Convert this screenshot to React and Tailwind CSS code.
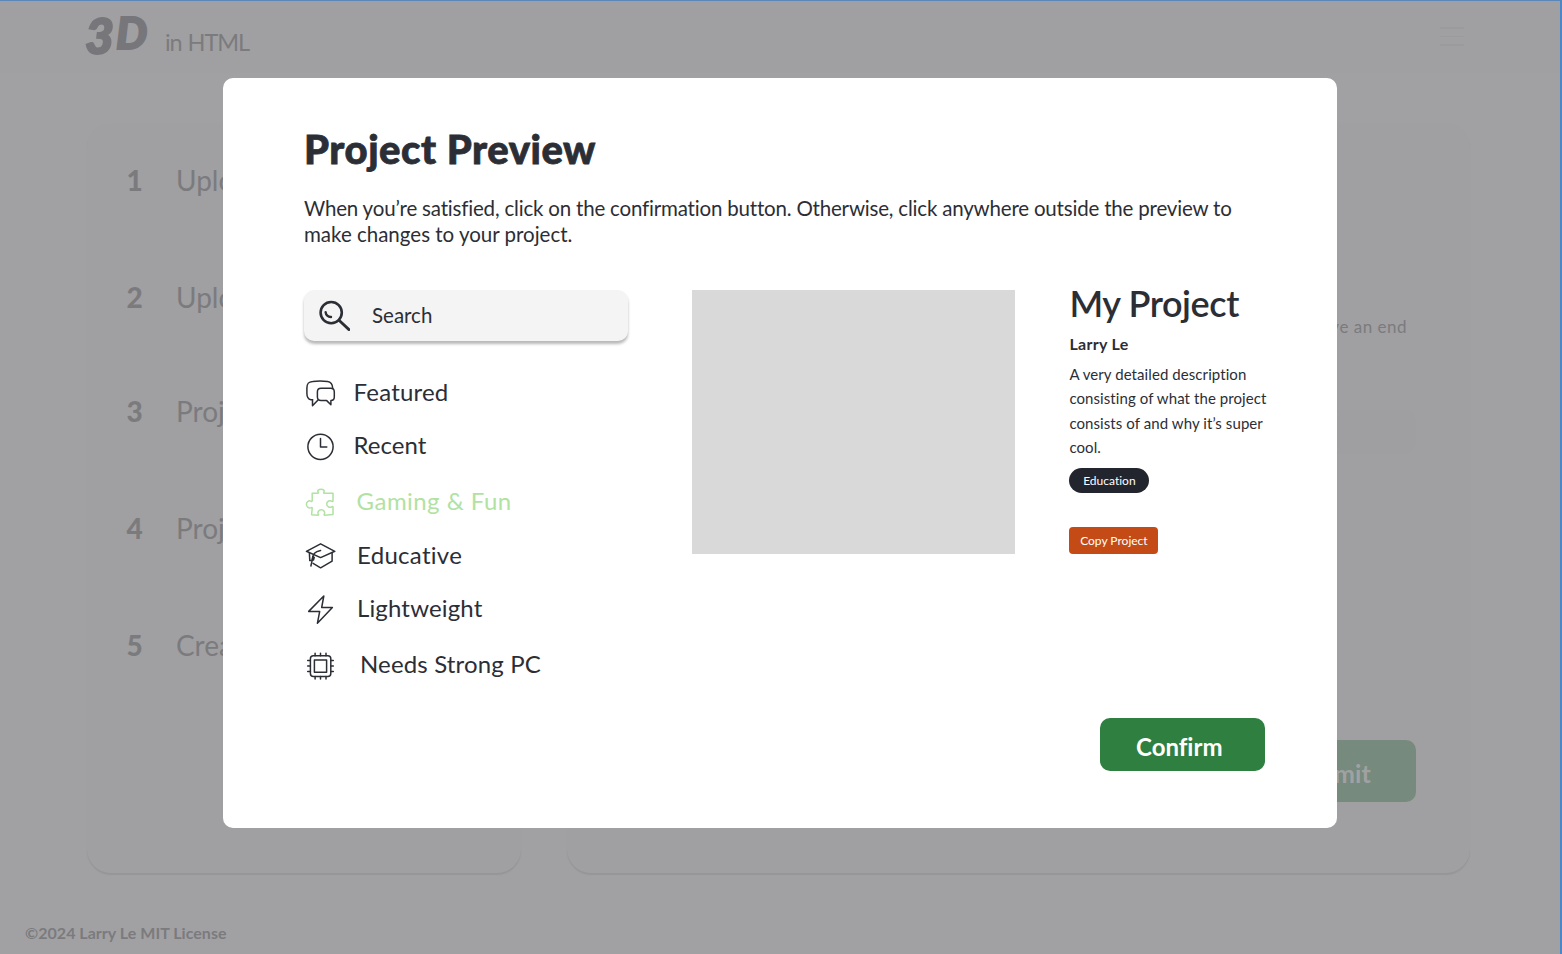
const steps = [
  { n: "1", label: "Upload", row: "mt-[41px]" },
  { n: "2", label: "Upload", row: "mt-[85px]" },
  { n: "3", label: "Project", row: "mt-[82px]" },
  { n: "4", label: "Project", row: "mt-[85px]" },
  { n: "5", label: "Create", row: "mt-[85px]" },
];

function Icon({ children, className = "" }) {
  return (
    <svg
      viewBox="0 0 32 32"
      className={`h-8 w-8 shrink-0 ${className}`}
      fill="none"
      stroke="currentColor"
      strokeWidth="1.5"
      strokeLinejoin="round"
      strokeLinecap="round"
    >
      {children}
    </svg>
  );
}

const ChatIcon = () => (
  <Icon>
    <path d="M7.5 22.8H5.9C2.8 22 1.9 19.8 1.9 16.5V11C1.9 6.3 3.5 4.7 7.7 4.4C12.5 3.9 17.5 3.9 22.5 4.4C25.8 4.7 27.5 6.5 27.7 11.3" />
    <path d="M7.5 22.8V28.8L12.8 23.2" />
    <path d="M16 11.3H25.7C28.3 11.3 29.3 12.5 29.3 14.9V20.1C29.3 22.4 28.1 23.6 25.9 23.6V27.8L21.7 23.6H16C13.4 23.6 12.4 22.3 12.4 20.1V14.9C12.4 12.5 13.5 11.3 16 11.3Z" />
  </Icon>
);
const ClockIcon = () => (
  <Icon>
    <circle cx="15.5" cy="16.8" r="12.6" />
    <path d="M15.5 8.4V16.9H21.8" />
  </Icon>
);
const PuzzleIcon = () => (
  <Icon>
    <path d="M7.2 7.2H12.9C13.4 7.2 13.5 6.7 13.2 6.3C12.1 4.5 13.5 3.3 16 3.3C18.5 3.3 19.9 4.5 18.8 6.3C18.5 6.7 18.6 7.2 19.1 7.2H28V15C28 15.5 27.4 15.7 27 15.3C25 13.9 21.7 15 21.7 18C21.7 21 25 22.1 27 20.6C27.4 20.3 28 20.4 28 20.9V28.5L19.6 29.3C19.1 29.3 19 28.7 19.3 28.2C20.3 26.2 18.9 23.8 16.3 23.8C13.7 23.8 12.3 26.2 13.3 28.2C13.6 28.7 13.5 29.3 13 29.3L6.6 28.8L7.2 22.1C7.2 21.5 6.7 21.3 6.2 21.6C3.8 22.6 1.4 21 1.4 18.3C1.4 15.6 3.8 14.1 6.2 15.3C6.7 15.6 7.2 15.4 7.2 14.8Z" />
  </Icon>
);
const CapIcon = () => (
  <Icon>
    <path d="M15.6 4.8L29.8 12.3L15.6 18.6L1.4 12.3Z" />
    <path d="M15.6 11.5C10.1 12.8 7.6 14.6 7.5 19.8L5.9 27" />
    <path d="M4.4 14.2L4.8 21.6H6.1M8.1 24.4L15.6 28.8L27.1 22.2V14" />
    <path d="M7.8 17.5L9.2 18.3L8.5 21L7.2 20.8Z" fill="currentColor" />
  </Icon>
);
const BoltIcon = () => (
  <Icon>
    <path d="M18.8 3L3.7 18.4H14.7L12.4 30.3L27.4 14.5H16.7Z" />
  </Icon>
);
const ChipIcon = () => (
  <Icon>
    <rect x="5.4" y="6.8" width="20.4" height="20.6" rx="3" />
    <rect x="9.4" y="10.9" width="12.2" height="12.4" />
    <path d="M10.1 4.3V6.8M15.5 4.3V6.8M21 4.3V6.8M10.1 27.4V29.9M15.5 27.4V29.9M21 27.4V29.9M2.7 11.5H5.4M2.7 17.1H5.4M2.7 22.5H5.4M25.8 11.5H28.3M25.8 17.1H28.3M25.8 22.5H28.3" />
  </Icon>
);

const categories = [
  { label: "Featured", icon: ChatIcon, row: "mt-9", text: "ml-[17px] pb-[2.5px] tracking-[0.2px]" },
  { label: "Recent", icon: ClockIcon, row: "mt-[21px]", text: "ml-[17px] pb-[2.5px]" },
  { label: "Gaming & Fun", icon: PuzzleIcon, row: "mt-6 text-[#b1e2a2]", text: "ml-[20px] pb-[2.5px] tracking-[0.45px]" },
  { label: "Educative", icon: CapIcon, row: "mt-[21px]", text: "ml-[20.4px] pb-[1px] tracking-[0.3px]" },
  { label: "Lightweight", icon: BoltIcon, row: "mt-[21.5px]", text: "ml-[20.4px] pb-[1px] tracking-[0.15px]" },
  { label: "Needs Strong PC", icon: ChipIcon, row: "mt-6", text: "ml-[23.4px] pb-[1px] tracking-[0.15px]" },
];

function Page() {
  return (
    <div className="flex h-full flex-col text-[#7b7b7e]">
      <header className="flex h-[73px] shrink-0 items-start bg-[#a0a0a2] pl-[85px] pr-[98px]">
        <div className="flex font-black italic text-[#77777b]">
          <span className="mt-[10px] block w-[31px] text-[50px] leading-[50px] [-webkit-text-stroke:2px_#77777b]">3</span>
          <span className="mt-[7px] block w-[49px] text-[44px] leading-[50px] [-webkit-text-stroke:2px_#77777b]">D</span>
        </div>
        <span className="mt-[27px] text-[23.5px] leading-[30px] tracking-[-1.05px] [word-spacing:1px]">in HTML</span>
        <div className="ml-auto mt-[27px] flex w-[24px] flex-col gap-[7px]">
          <i className="h-[1.5px] bg-[#9b9b9d]" />
          <i className="h-[1.5px] bg-[#9b9b9d]" />
          <i className="h-[1.5px] bg-[#9b9b9d]" />
        </div>
      </header>
      <main className="mt-[50px] flex h-[750px] shrink-0 gap-[46px] pl-[87px]">
        <section className="w-[434px] rounded-[24px] bg-[#a0a0a2] pl-[39.5px] shadow-[0_2px_1px_#969698]">
          {steps.map((s) => (
            <div key={s.n} className={`flex h-8 items-center text-[28px] leading-8 ${s.row}`}>
              <b className="w-[49.5px] font-black">{s.n}</b>
              <span>{s.label}</span>
            </div>
          ))}
        </section>
        <section className="flex w-[903px] flex-col items-end rounded-[24px] bg-[#a0a0a2] pr-[54px] shadow-[0_2px_1px_#969698]">
          <p className="mr-[9px] mt-[192px] text-[17px] leading-6 tracking-[0.5px]">have an end</p>
          <div className="mt-[71px] h-[44px] w-[400px] rounded-xl bg-[#9f9fa1]" />
          <button className="mt-[286px] flex h-[62px] w-[165px] items-center justify-center rounded-[10px] bg-[#768a7d] pt-1.5 pr-[4px] text-[25px] font-bold text-[#a1a1a3]">
            Submit
          </button>
        </section>
      </main>
      <footer className="mt-[48px] pl-[25px] text-[16px] font-bold leading-6 tracking-[0.03px]">©2024 Larry Le MIT License</footer>
    </div>
  );
}

function Modal() {
  return (
    <div className="h-[750.4px] w-[1114.4px] rounded-[10px] bg-white pl-[81px] pt-[47px] text-[#2c2e36]">
      <h1 className="text-[40px] font-black leading-[48px] tracking-[0.55px] [-webkit-text-stroke:0.8px_#2c2e36]">Project Preview</h1>
      <p className="mt-[22px] w-[960px] text-[20.5px] leading-[26px]">
        <span className="tracking-[-0.19px]">
          When you’re satisfied, click on the confirmation button. Otherwise, click anywhere outside the preview to
        </span>
        <br />
        make changes to your project.
      </p>
      <div className="mt-[43px] flex h-[428px] items-start">
        <nav className="w-[324px]">
          <div className="flex h-[51px] items-center rounded-[10px] bg-[#f4f4f4] pl-[14px] shadow-[0_3px_3px_rgba(0,0,0,0.28)]">
            <svg viewBox="0 0 32 32" className="h-8 w-8" fill="none" stroke="currentColor" strokeLinecap="round">
              <circle cx="13.2" cy="12.6" r="10.6" strokeWidth="2.6" />
              <path d="M21 20.3L31 29.6" strokeWidth="2.8" />
              <path d="M7.6 12.2C8 15 10 17 13 17" strokeWidth="2.4" />
            </svg>
            <span className="ml-[22px] text-[20.5px]">Search</span>
          </div>
          {categories.map(({ label, icon: Glyph, row, text }) => (
            <div key={label} className={`flex h-8 items-center pl-[0.6px] ${row}`}>
              <Glyph />
              <span className={`text-[24px] leading-7 ${text}`}>{label}</span>
            </div>
          ))}
        </nav>
        <div className="ml-[64.4px] h-[264px] w-[323px] bg-[#d9d9d9]" />
        <aside className="-mt-[7px] ml-[54px] flex w-[210px] flex-col items-start">
          <h2 className="text-[36px] font-semibold leading-10 tracking-[-0.4px]">My Project</h2>
          <div className="mt-[11px] text-[16px] font-bold leading-5 tracking-[0.3px]">Larry Le</div>
          <p className="mt-[8px] text-[15px] leading-[24.3px] tracking-[0.08px]">
            A very detailed description
            <br />
            consisting of what the project
            <br />
            consists of and why it’s super
            <br />
            cool.
          </p>
          <span className="mt-[9px] flex h-[25px] w-[80px] items-center justify-center rounded-full bg-[#23252e] text-[12px] text-white">
            Education
          </span>
          <button className="mt-[34px] flex h-[27px] w-[89px] items-center justify-center rounded-[4px] bg-[#c44b16] text-[12px] text-white">
            Copy Project
          </button>
          <button className="ml-[30.4px] mt-[164px] flex h-[53px] w-[165px] items-center justify-center rounded-[10px] bg-[#2f8040] pr-[6px] pt-[4px] text-[24px] font-bold text-white">
            Confirm
          </button>
        </aside>
      </div>
    </div>
  );
}

export default function App() {
  return (
    <div className="relative h-[954px] w-[1562px] overflow-hidden whitespace-nowrap bg-[#a1a1a3] font-['Lato',sans-serif] [font-variant-ligatures:none]">
      <Page />
      <div className="absolute inset-0 border-r-2 border-t border-r-[#4b87c6] border-t-[#5a86b8] pl-[223px] pt-[77px]">
        <Modal />
      </div>
    </div>
  );
}
